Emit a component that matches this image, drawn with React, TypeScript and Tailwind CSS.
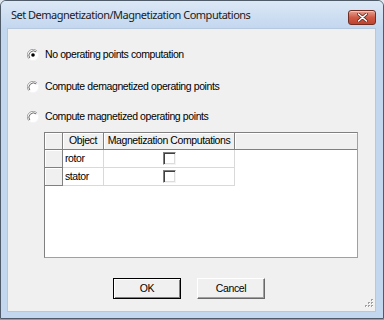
import React from 'react';

function Radio({ checked }: { checked?: boolean }) {
  return (
    <svg width="12" height="12" viewBox="0 0 12 12" className="shrink-0">
      <circle cx="6" cy="6" r="5.5" fill="#ffffff" />
      <path d="M10.2 2.2 A5.5 5.5 0 0 0 1.8 9.8" fill="none" stroke="#a0a0a0" strokeWidth="1" />
      <path d="M9.2 2.9 A4.5 4.5 0 0 0 2.8 9.1" fill="none" stroke="#696969" strokeWidth="1" />
      <path d="M1.8 9.8 A5.5 5.5 0 0 0 10.2 2.2" fill="none" stroke="#f4f4f4" strokeWidth="1" />
      {checked && <circle cx="6" cy="6" r="1.8" fill="#000000" />}
    </svg>
  );
}

function CheckBox() {
  return (
    <div className="w-[13px] h-[13px] bg-white border-t border-l border-[#808080] border-b border-r border-b-[#f4f4f4] border-r-[#f4f4f4] shadow-[inset_1px_1px_0_#404040,inset_-1px_-1px_0_#dcdcdc]" />
  );
}

function RadioRow({ label, checked }: { label: string; checked?: boolean }) {
  return (
    <div className="flex items-center h-[16px] ml-[19px] gap-[6px]">
      <Radio checked={checked} />
      <span>{label}</span>
    </div>
  );
}

function Button({ label, def }: { label: string; def?: boolean }) {
  return (
    <div
      className={
        def
          ? 'w-[68px] h-[21px] flex items-center justify-center bg-[#f0f0f0] border border-[#000000] shadow-[inset_1px_1px_0_#ffffff,inset_-1px_-1px_0_#808080]'
          : 'w-[68px] h-[21px] flex items-center justify-center bg-[#f0f0f0] border border-t-[#ffffff] border-l-[#ffffff] border-b-[#696969] border-r-[#696969] shadow-[inset_-1px_-1px_0_#a0a0a0]'
      }
    >
      {label}
    </div>
  );
}

export default function App() {
  const rows = ['rotor', 'stator'];

  return (
    <div className="w-[384px] h-[320px] bg-[#dfe6ee] flex flex-col overflow-hidden">
      <div className="h-[319px] border border-[#4f5b68] rounded-t-[6px] bg-[#c3d7ef] flex flex-col">
        {/* title bar */}
        <div className="h-[27px] flex items-center pl-[10px] pr-[7px] bg-gradient-to-b from-[#dce8f6] to-[#c3d7ef] rounded-t-[5px]">
          <span className="text-[11px] tracking-[-0.5px] text-[#1b1b1b] font-['Noto_Sans',sans-serif] mt-[1px]">
            Set Demagnetization/Magnetization Computations
          </span>
          <div className="ml-auto mt-[5px] w-[28px] h-[15px] rounded-[3px] border border-[#6e2e24] bg-gradient-to-b from-[#e5a093] via-[#cf5a45] to-[#c0432e] flex items-center justify-center shadow-[inset_0_1px_0_#f2c3b9]">
            <svg width="11" height="9" viewBox="0 0 11 9">
              <path d="M1.5 1 L9.5 8 M9.5 1 L1.5 8" stroke="#5a2a24" strokeWidth="3" strokeLinecap="round" />
              <path d="M1.5 1 L9.5 8 M9.5 1 L1.5 8" stroke="#ffffff" strokeWidth="1.6" strokeLinecap="round" />
            </svg>
          </div>
        </div>

        {/* client area */}
        <div className="relative ml-[6px] w-[369px] h-[284px] bg-[#f0f0f0] border border-[#b6c8dd] text-[10.5px] tracking-[-0.4px] text-black font-['Liberation_Sans',Arial,sans-serif] flex flex-col">
          <div className="mt-[18px]">
            <RadioRow label="No operating points computation" checked />
          </div>
          <div className="mt-[16px]">
            <RadioRow label="Compute demagnetized operating points" />
          </div>
          <div className="mt-[14px]">
            <RadioRow label="Compute magnetized operating points" />
          </div>

          {/* grid */}
          <div className="mt-[7px] ml-[36px] w-[314px] h-[126px] bg-white border border-[#808080] border-b-[#a0a0a0] border-r-[#a0a0a0] flex flex-col">
            <div className="h-[17px] flex bg-[#f0f0f0] border-b border-[#808080]">
              <div className="w-[18px] border-r border-[#808080] shadow-[inset_1px_1px_0_#ffffff]" />
              <div className="w-[41px] border-r border-[#808080] shadow-[inset_1px_1px_0_#ffffff] flex items-center justify-center whitespace-nowrap">
                Object
              </div>
              <div className="w-[131px] border-r border-[#808080] shadow-[inset_1px_1px_0_#ffffff] flex items-center justify-center whitespace-nowrap">
                Magnetization Computations
              </div>
              <div className="flex-1 shadow-[inset_1px_1px_0_#ffffff]" />
            </div>
            {rows.map((r) => (
              <div key={r} className="h-[18px] flex">
                <div className="w-[18px] bg-[#f0f0f0] border-r border-b border-[#808080] shadow-[inset_1px_1px_0_#ffffff]" />
                <div className="w-[41px] border-r border-b border-[#d9d9d9] flex items-center pl-[2px]">{r}</div>
                <div className="w-[131px] border-r border-b border-[#d9d9d9] flex items-center justify-center">
                  <CheckBox />
                </div>
              </div>
            ))}
          </div>

          {/* buttons */}
          <div className="mt-[20px] ml-[105px] flex gap-[16px]">
            <Button label="OK" def />
            <Button label="Cancel" />
          </div>

          {/* size grip */}
          <svg className="absolute right-[1px] bottom-[1px]" width="11" height="11" viewBox="0 0 11 11">
            {[
              [9, 1], [9, 4], [6, 4], [9, 7], [6, 7], [3, 7],
            ].map(([x, y], i) => (
              <g key={i}>
                <rect x={x} y={y} width="1" height="1" fill="#ffffff" />
                <rect x={x - 1} y={y - 1} width="1" height="1" fill="#a0a0a0" />
                <rect x={x} y={y - 1} width="1" height="1" fill="#a0a0a0" />
                <rect x={x - 1} y={y} width="1" height="1" fill="#a0a0a0" />
              </g>
            ))}
          </svg>
        </div>
      </div>
      <div className="h-[1px] bg-[#33c2d9]" />
    </div>
  );
}
